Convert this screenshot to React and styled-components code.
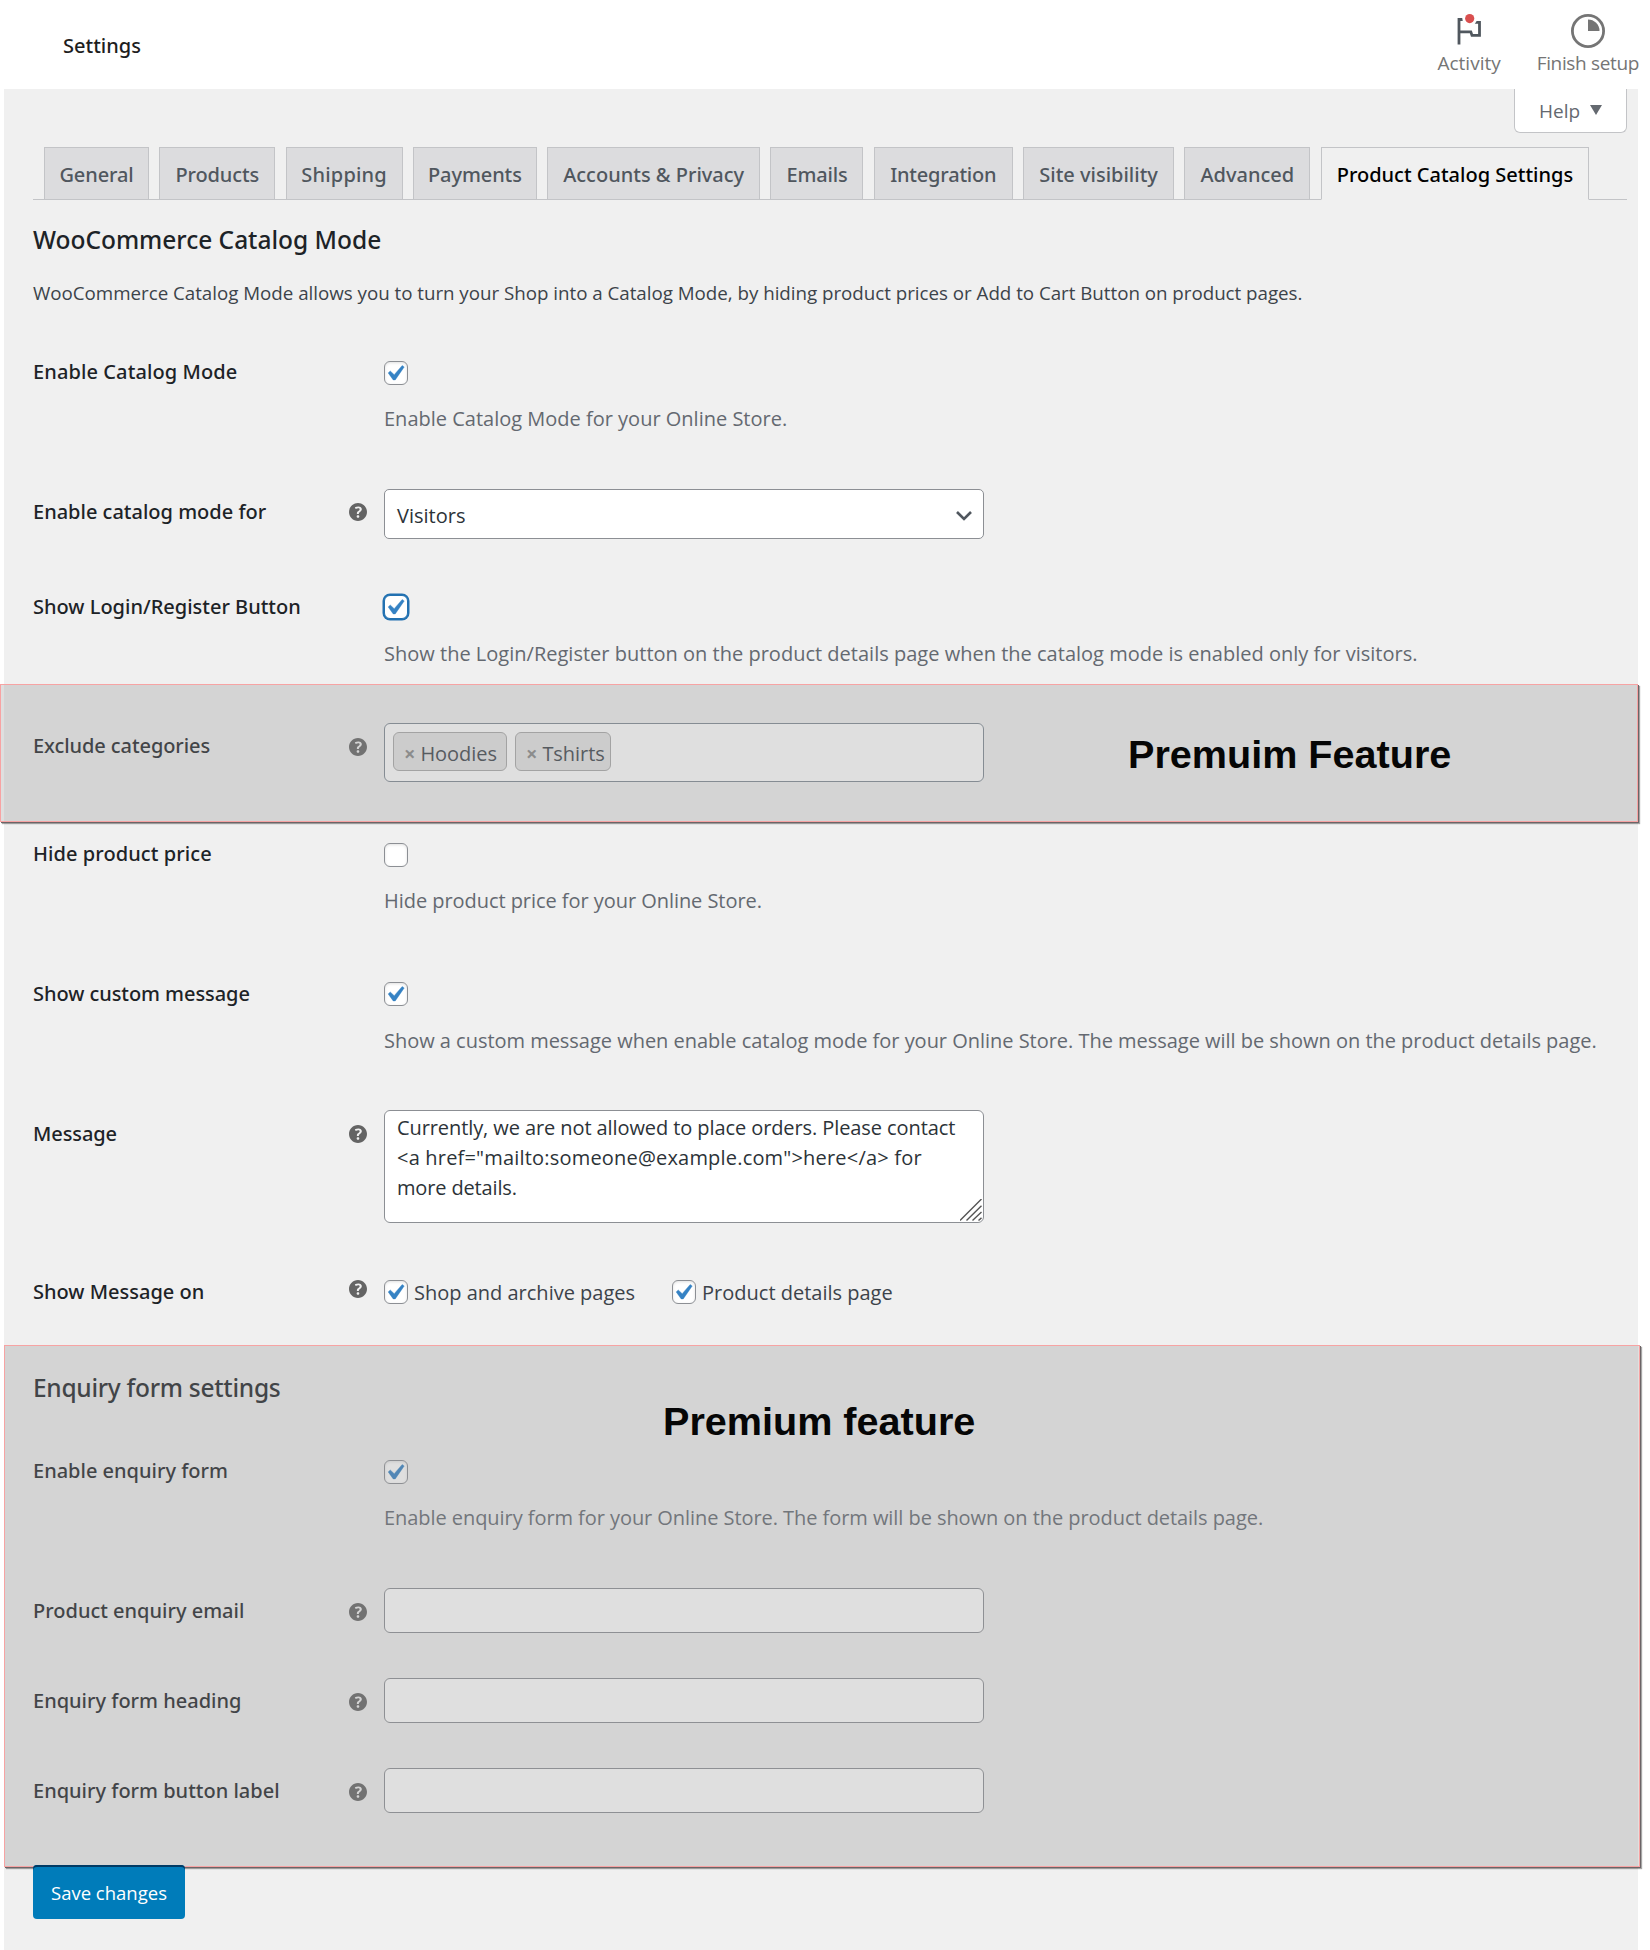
import React from 'react';
import styled, { createGlobalStyle, css } from 'styled-components';

const Global = createGlobalStyle`
  * { box-sizing: border-box; }
  body { margin: 0; background: #fff; }
`;

const Page = styled.div`
  width: 1650px;
  height: 1950px;
  overflow: hidden;
  display: flex;
  flex-direction: column;
  font-family: 'Open Sans', 'Noto Sans', sans-serif;
  font-size: 20px;
  line-height: 30px;
  color: #3c434a;
`;

const medium = css`
  font-family: 'Noto Sans', 'Open Sans', sans-serif;
  font-weight: 500;
`;

/* ---------- top bar ---------- */

const TopBar = styled.header`
  height: 89px;
  flex: none;
  display: flex;
  justify-content: space-between;
  padding: 11px 11px 0 63px;
  background: #fff;
`;

const PageName = styled.h1`
  ${medium}
  margin: 20px 0 0;
  font-size: 20px;
  line-height: 30px;
  color: #1e1e1e;
`;

const Actions = styled.div`
  display: flex;
  gap: 36px;
`;

const Action = styled.button`
  display: flex;
  flex-direction: column;
  align-items: center;
  justify-content: flex-start;
  padding: 0;
  border: 0;
  background: none;
  font: inherit;
  font-size: 19px;
  line-height: 24px;
  letter-spacing: ${(p) => p.$spacing || 0}px;
  white-space: nowrap;
  color: #757575;

  svg { display: block; margin-bottom: 2px; }
`;

/* ---------- panel ---------- */

const Panel = styled.main`
  flex: 1;
  display: flex;
  flex-direction: column;
  width: 1634px;
  margin-left: 4px;
  padding: 0 11px 0 29px;
  background: #f0f0f0;
`;

const HelpTab = styled.button`
  align-self: flex-end;
  display: flex;
  align-items: center;
  gap: 10px;
  width: 113px;
  height: 44px;
  padding: 1px 0 0 24px;
  border: 1px solid #c3c4c7;
  border-top: 0;
  border-radius: 0 0 6px 6px;
  background: #fff;
  font: inherit;
  font-size: 19px;
  color: #646970;
`;

const Triangle = styled.span`
  margin-top: -3px;
  border: 6px solid transparent;
  border-top: 10px solid #646970;
  border-bottom: 0;
`;

const Tabs = styled.nav`
  display: flex;
  gap: 10.3px;
  margin-top: 14px;
  padding-left: 11px;
  border-bottom: 1px solid #c3c4c7;
`;

const Tab = styled.a`
  ${medium}
  display: flex;
  align-items: center;
  justify-content: center;
  width: ${(p) => p.$width}px;
  height: 53px;
  margin-bottom: -1px;
  padding-top: 3px;
  border: 1px solid #c3c4c7;
  border-bottom-color: ${(p) => (p.$active ? '#f0f0f0' : '#c3c4c7')};
  background: ${(p) => (p.$active ? '#f0f0f0' : '#dcdcde')};
  color: ${(p) => (p.$active ? '#000' : '#50575e')};
  letter-spacing: ${(p) => p.$spacing || 0}px;
  white-space: nowrap;
`;

const Heading = styled.h2`
  ${medium}
  position: relative;
  margin: ${(p) => p.$top}px 0 0;
  font-size: 24.5px;
  line-height: 34px;
  letter-spacing: ${(p) => p.$spacing || 0}px;
  color: #1d2327;
`;

const Intro = styled.p`
  margin: 22px 0 27px;
  font-size: 18.75px;
  line-height: 28px;
  letter-spacing: -0.02px;
  white-space: nowrap;
`;

/* ---------- form rows ---------- */

const RowBox = styled.div`
  position: relative;
  display: grid;
  grid-template-columns: 315.5px 35.5px 1fr;
  align-items: start;
  height: ${(p) => p.$height}px;
`;

const Label = styled.label`
  ${medium}
  margin-top: 23px;
  letter-spacing: ${(p) => p.$spacing || 0}px;
  color: #1d2327;
`;

const HelpSlot = styled.span`
  height: 18px;
  margin-top: ${(p) => p.$top}px;
  svg { display: block; }
`;

const Field = styled.div`
  display: flex;
  flex-direction: column;
  align-items: flex-start;
  padding-top: ${(p) => p.$top}px;
`;

const Check = styled.span`
  flex: none;
  width: 24px;
  height: 24px;
  border: 1px solid ${(p) => (p.$focus ? '#2271b1' : '#8c8f94')};
  border-radius: 6px;
  background: #fff;
  box-shadow: ${(p) => (p.$focus ? '0 0 0 1.5px #2271b1' : 'inset 0 1px 3px rgba(0, 0, 0, 0.12)')};

  svg { display: block; }
`;

const Hint = styled.p`
  position: absolute;
  margin: 0;
  white-space: nowrap;
  letter-spacing: ${(p) => p.$spacing || 0}px;
  color: #646970;
`;

const HintLine = styled(Hint)`
  position: static;
  margin-top: ${(p) => p.$gap}px;
`;

const Select = styled.div`
  display: flex;
  align-items: center;
  justify-content: space-between;
  width: 600px;
  height: 50px;
  padding: 3px 11px 0 12px;
  border: 1px solid #8c8f94;
  border-radius: 5px;
  background: #fff;
  color: #2c3338;
`;

const Input = styled.input`
  width: 600px;
  height: 45px;
  padding: 0 12px;
  border: 1px solid #8c8f94;
  border-radius: 6px;
  background: #fff;
  font: inherit;
`;

const TextArea = styled.div`
  position: relative;
  width: 600px;
  height: 113px;
  padding: 2px 12px;
  border: 1px solid #8c8f94;
  border-radius: 6px;
  background: #fff;
  color: #2c3338;
`;

const Line = styled.span`
  display: block;
  white-space: nowrap;
  letter-spacing: ${(p) => p.$spacing || 0}px;
`;

const Grip = styled.svg`
  position: absolute;
  right: 1px;
  bottom: 1px;
`;

const TagBox = styled.div`
  display: flex;
  gap: 8px;
  width: 600px;
  height: 59px;
  padding: 8px;
  border: 1px solid #7e8993;
  border-radius: 6px;
  background: #fff;
`;

const Tag = styled.span`
  display: flex;
  align-items: center;
  gap: 5px;
  height: 39px;
  width: ${(p) => p.$width}px;
  padding: 4px 0 0 10px;
  border: 1px solid #aaa;
  border-radius: 6px;
  background: #e4e4e4;
  letter-spacing: -0.05px;
  color: #3c434a;

  b {
    font-size: 20px;
    font-weight: 700;
    color: #888;
  }
`;

const CheckList = styled.div`
  display: flex;
  gap: 37px;
`;

const CheckItem = styled.label`
  display: flex;
  align-items: flex-start;
  gap: 6px;
  height: 24px;
  line-height: 26px;
  white-space: nowrap;
`;

/* ---------- premium areas ---------- */

const PremiumSection = styled.section`
  position: relative;
  height: 498px;
  padding-top: 26px;
`;

const Shade = styled.div`
  position: absolute;
  z-index: 1;
  top: ${(p) => p.$top}px;
  left: ${(p) => p.$left}px;
  width: ${(p) => p.$width}px;
  height: ${(p) => p.$height}px;
  padding: ${(p) => p.$pad};
  border: 1px solid #f7a3a3;
  background: rgba(150, 150, 150, 0.3);
  box-shadow: 1px 1px 0 #6c6466, 2px 2px 1px rgba(0, 0, 0, 0.35);
  font: bold 39.6px/46px 'Liberation Sans', Arial, sans-serif;
  white-space: nowrap;
  color: #060606;
`;

const Save = styled.button`
  position: relative;
  z-index: 2;
  width: 152px;
  height: 54px;
  margin-top: 22px;
  padding: 1px 0 0;
  border: 0;
  border-radius: 4px;
  background: #007cba;
  box-shadow: inset 0 2px 0 #003a64;
  font: inherit;
  font-size: 18.5px;
  white-space: nowrap;
  color: #fff;
`;

/* ---------- icons ---------- */

const FlagIcon = () => (
  <svg width="28" height="38" viewBox="0 0 28 38" fill="none">
    <path d="M4 33.5V8.5H15l1 2.8h8.5V24.4H17l-1.2-3.6H4" stroke="#50575e" strokeWidth="2.8" />
    <circle cx="14.7" cy="7.6" r="7.4" fill="#fff" />
    <circle cx="14.7" cy="7.6" r="4.6" fill="#d94f4f" />
  </svg>
);

const ProgressIcon = () => (
  <svg width="36" height="38" viewBox="0 0 36 38">
    <circle cx="18" cy="20" r="15.6" fill="#fff" stroke="#757575" strokeWidth="2.8" />
    <path d="M18 20V8.5A11.5 11.5 0 0 1 29.5 20z" fill="#757575" />
  </svg>
);

const HelpIcon = () => (
  <svg width="18" height="18" viewBox="3 3 14 14" fill="#646464">
    <path d="M17 10c0-3.87-3.14-7-7-7-3.87 0-7 3.13-7 7s3.13 7 7 7c3.86 0 7-3.13 7-7zm-6.3 1.48H9.14v-.43c0-.38.08-.7.24-.98s.46-.57.88-.89c.41-.29.68-.53.81-.71.14-.18.2-.39.2-.62 0-.25-.09-.44-.28-.58-.19-.13-.45-.19-.79-.19-.58 0-1.25.19-2 .57l-.64-1.28c.87-.49 1.8-.74 2.77-.74.81 0 1.45.2 1.92.58.48.39.71.91.71 1.55 0 .43-.09.8-.29 1.11-.19.32-.57.67-1.11 1.06-.38.28-.61.49-.71.63-.1.15-.15.34-.15.57v.35zm-1.47 2.74c-.18-.17-.27-.42-.27-.73 0-.33.08-.58.26-.75s.43-.25.77-.25c.32 0 .57.09.75.26s.27.42.27.74c0 .3-.09.55-.27.72-.18.18-.43.27-.75.27-.33 0-.58-.09-.76-.26z" />
  </svg>
);

const Checkbox = ({ checked, focus }) => (
  <Check $focus={focus}>
    {checked && (
      <svg width="22" height="22" viewBox="3.74 2.65 14.2 14.2" fill="#3582c4" stroke="#3582c4" strokeWidth="0.25">
        <path d="M14.83 4.89l1.34.94-5.81 8.38H9.02L5.78 9.67l1.34-1.25 2.57 2.4z" />
      </svg>
    )}
  </Check>
);

/* ---------- composition ---------- */

const Row = ({ label, spacing, height, top, help, helpTop = 29, children, shade }) => (
  <RowBox $height={height}>
    <Label $spacing={spacing}>{label}</Label>
    <HelpSlot $top={helpTop}>{help && <HelpIcon />}</HelpSlot>
    <Field $top={top}>{children}</Field>
    {shade}
  </RowBox>
);

const CheckRow = ({ hint, hintSpacing, checked, focus, top = 27, ...row }) => (
  <Row top={top} {...row}>
    <Checkbox checked={checked} focus={focus} />
    <HintLine $gap={46 - top} $spacing={hintSpacing}>{hint}</HintLine>
  </Row>
);

const tabs = [
  ['General', 105, -0.1],
  ['Products', 116, -0.1],
  ['Shipping', 117, 0.2],
  ['Payments', 124, -0.1],
  ['Accounts & Privacy', 213, 0],
  ['Emails', 93, -0.2],
  ['Integration', 139, -0.2],
  ['Site visibility', 151, 0],
  ['Advanced', 126, 0],
  ['Product Catalog Settings', 268.5, 0],
];

export default function App() {
  return (
    <Page>
      <Global />
      <TopBar>
        <PageName>Settings</PageName>
        <Actions>
          <Action>
            <FlagIcon />
            <span>Activity</span>
          </Action>
          <Action $spacing={-0.35}>
            <ProgressIcon />
            <span>Finish setup</span>
          </Action>
        </Actions>
      </TopBar>

      <Panel>
        <HelpTab>
          Help <Triangle />
        </HelpTab>
        <Tabs>
          {tabs.map(([name, width, spacing]) => (
            <Tab key={name} $width={width} $spacing={spacing} $active={name === 'Product Catalog Settings'}>
              {name}
            </Tab>
          ))}
        </Tabs>

        <Heading $top={23} $spacing={-0.02}>WooCommerce Catalog Mode</Heading>
        <Intro>
          WooCommerce Catalog Mode allows you to turn your Shop into a Catalog Mode, by hiding product prices or Add to
          Cart Button on product pages.
        </Intro>

        <CheckRow
          label="Enable Catalog Mode"
          spacing={0.1}
          height={140}
          checked
          hint="Enable Catalog Mode for your Online Store."
        />
        <Row label="Enable catalog mode for" height={95} top={15} help>
          <Select>
            Visitors
            <svg width="16" height="10" viewBox="0 0 16 10" fill="none">
              <path d="M1 1l7 7 7-7" stroke="#50575e" strokeWidth="2.6" />
            </svg>
          </Select>
        </Row>
        <CheckRow
          label="Show Login/Register Button"
          height={139}
          top={26}
          checked
          focus
          hintSpacing={0.01}
          hint="Show the Login/Register button on the product details page when the catalog mode is enabled only for visitors."
        />
        <Row
          label="Exclude categories"
          spacing={-0.08}
          height={108}
          top={15}
          help
          helpTop={30}
          shade={
            <Shade $top={-24} $left={-33} $width={1638} $height={138} $pad="46px 0 0 1127px">
              Premuim Feature
            </Shade>
          }
        >
          <TagBox>
            <Tag $width={114}><b>×</b>Hoodies</Tag>
            <Tag $width={96}><b>×</b>Tshirts</Tag>
          </TagBox>
        </Row>
        <CheckRow
          label="Hide product price"
          spacing={0.08}
          height={140}
          hintSpacing={-0.05}
          hint="Hide product price for your Online Store."
        />
        <CheckRow
          label="Show custom message"
          spacing={-0.06}
          height={140}
          top={26}
          checked
          hintSpacing={-0.025}
          hint="Show a custom message when enable catalog mode for your Online Store. The message will be shown on the product details page."
        />
        <Row label="Message" spacing={-0.1} height={158} top={14} help>
          <TextArea>
            <Line $spacing={-0.09}>Currently, we are not allowed to place orders. Please contact</Line>
            <Line $spacing={0.19}>{'<a href="mailto:someone@example.com">here</a> for'}</Line>
            <Line $spacing={-0.15}>more details.</Line>
            <Grip width="22" height="22" viewBox="0 0 22 22">
              <path d="M0 21.5L21.5 0M6.5 21.5L21.5 6.8M12.5 21.5L21.5 13M18.5 21.5l3-2.6" stroke="#555" strokeWidth="1.4" />
            </Grip>
          </TextArea>
        </Row>
        <Row label="Show Message on" height={91} top={26} help helpTop={26}>
          <CheckList>
            <CheckItem><Checkbox checked />Shop and archive pages</CheckItem>
            <CheckItem><Checkbox checked />Product details page</CheckItem>
          </CheckList>
        </Row>

        <PremiumSection>
          <Heading $top={0} $spacing={-0.28}>Enquiry form settings</Heading>
          <RowBox $height={28} />
          <CheckRow
            label="Enable enquiry form"
            height={140}
            checked
            hintSpacing={-0.06}
            hint="Enable enquiry form for your Online Store. The form will be shown on the product details page."
          />
          <Row label="Product enquiry email" height={90} top={15} help helpTop={30}>
            <Input />
          </Row>
          <Row label="Enquiry form heading" height={90} top={15} help helpTop={30}>
            <Input />
          </Row>
          <Row label="Enquiry form button label" height={90} top={15} help helpTop={30}>
            <Input />
          </Row>
          <Shade $top={0} $left={-29} $width={1636} $height={522} $pad="52px 0 0 658px">
            Premium feature
          </Shade>
        </PremiumSection>

        <Save>Save changes</Save>
      </Panel>
    </Page>
  );
}
